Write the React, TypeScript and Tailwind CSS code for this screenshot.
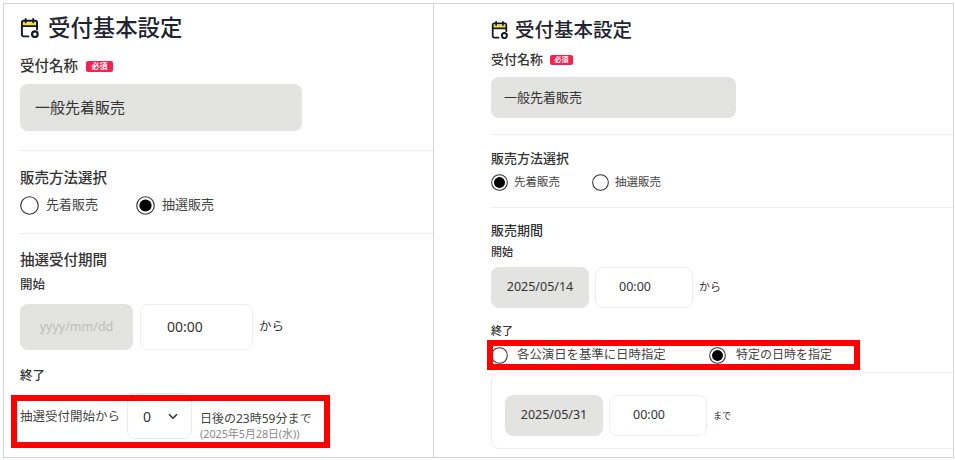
import type {ReactNode} from 'react'

function CalendarIcon({size}: {size: number}) {
  return (
    <svg width={size} height={size} viewBox="1.5 0.5 18 18.5" fill="none" className="shrink-0">
      <path d="M3 8V4.5h14V8z" fill="#f5e12a" />
      <path
        d="M9 17.5H4.5A1.5 1.5 0 0 1 3 16V4.5A1.5 1.5 0 0 1 4.5 3h11A1.5 1.5 0 0 1 17 4.5V11M3 8h14M6.5 1.5v3M13.5 1.5v3"
        stroke="#111827"
        strokeWidth="1.8"
        strokeLinecap="round"
      />
      <circle cx="15" cy="15.5" r="2.6" stroke="#111827" strokeWidth="2" />
    </svg>
  )
}

function Radio({checked, size}: {checked?: boolean; size: number}) {
  return (
    <svg width={size} height={size} viewBox="0 0 18 18" className="shrink-0">
      <circle cx="9" cy="9" r="8.3" fill="#fff" stroke="#333" strokeWidth="1.1" />
      {checked && <circle cx="9" cy="9" r="5.8" fill="#000" />}
    </svg>
  )
}

function Required({className}: {className: string}) {
  return (
    <span className={`flex items-center justify-center rounded-[2px] bg-[#f5214f] font-bold text-white ${className}`}>
      必須
    </span>
  )
}

function Field({children, className}: {children: ReactNode; className: string}) {
  return <div className={`flex items-center rounded-lg ${className}`}>{children}</div>
}

function LeftPanel() {
  return (
    <div className="w-[430px] shrink-0 border-r border-[#d4d4d4] pl-[16px] pt-[9px]">
      <div className="flex h-[30px] items-center gap-[8px]">
        <CalendarIcon size={20} />
        <h2 className="text-[22.4px] font-medium leading-none text-[#1f2430]">受付基本設定</h2>
      </div>
      <div className="mt-[13px] flex h-[20px] items-center gap-[8px]">
        <span className="text-[14.5px] font-medium text-[#333]">受付名称</span>
        <Required className="h-[11px] w-[27px] text-[8px]" />
      </div>
      <Field className="mt-[8px] h-[47px] w-[282px] bg-[#e3e3e2] pl-[15px] text-[15px] text-[#333]">
        一般先着販売
      </Field>
      <div className="mt-[19px] border-t border-[#eeeeee]" />

      <div className="mt-[17px] text-[14.5px] leading-[18px] font-medium text-[#333]">販売方法選択</div>
      <div className="mt-[9px] flex h-[20px] items-center text-[13px] text-[#444]">
        <Radio size={19} />
        <span className="ml-[7px] w-[90px]">先着販売</span>
        <Radio checked size={19} />
        <span className="ml-[7px]">抽選販売</span>
      </div>
      <div className="mt-[18px] border-t border-[#eeeeee]" />

      <div className="mt-[16px] text-[14.5px] leading-[18px] font-medium text-[#333]">抽選受付期間</div>
      <div className="mt-[8px] text-[12.5px] leading-[18px] font-medium text-[#333]">開始</div>
      <div className="mt-[10px] flex items-center">
        <Field className="h-[46px] w-[113px] justify-center bg-[#e3e3e2] text-[12.5px] text-[#bdbdbd]">
          yyyy/mm/dd
        </Field>
        <Field className="ml-[7px] h-[46px] w-[113px] border border-[#eeeeee] pb-[1px] pl-[26px] text-[14px] text-[#333]">
          00:00
        </Field>
        <span className="ml-[6px] text-[12.5px] text-[#333]">から</span>
      </div>
      <div className="mt-[17px] text-[12.5px] leading-[18px] font-medium text-[#333]">終了</div>
      <div className="mt-[8px] flex items-start">
        <span className="w-[107px] self-center pt-[2px] text-[12.5px] text-[#444]">抽選受付開始から</span>
        <div className="flex h-[46px] w-[65px] items-center justify-between rounded-lg border border-[#e8eaf0] pl-[15px] pr-[13px] pt-[1px] text-[14px] text-[#333]">
          0
          <svg width="10" height="7" viewBox="0 0 10 7" fill="none">
            <path d="M1 1.2l4 4 4-4" stroke="#333" strokeWidth="1.6" />
          </svg>
        </div>
        <div className="ml-[8px] pt-[17px]">
          <div className="text-[12px] leading-[18px] text-[#444]">日後の23時59分まで</div>
          <div className="text-[10.8px] leading-[12px] text-[#8a8a8a]">(2025年5月28日(水))</div>
        </div>
      </div>
    </div>
  )
}

function RightPanel() {
  return (
    <div className="min-w-0 flex-1 pl-[57px] pt-[12px]">
      <div className="flex h-[28px] items-center gap-[6px]">
        <CalendarIcon size={18} />
        <h2 className="text-[19.5px] font-medium leading-none text-[#1f2430]">受付基本設定</h2>
      </div>
      <div className="mt-[7px] flex h-[18px] items-center gap-[7px]">
        <span className="text-[13px] font-medium text-[#333]">受付名称</span>
        <Required className="h-[10px] w-[23px] text-[7px]" />
      </div>
      <Field className="mt-[8px] h-[41px] w-[245px] bg-[#e3e3e2] pl-[13px] text-[13px] text-[#333]">
        一般先着販売
      </Field>
      <div className="mt-[16px] border-t border-[#eeeeee]" />

      <div className="mt-[15px] text-[13px] leading-[16px] font-medium text-[#333]">販売方法選択</div>
      <div className="mt-[7px] flex h-[18px] items-center text-[11.5px] text-[#444]">
        <Radio checked size={17} />
        <span className="ml-[6px] w-[78px]">先着販売</span>
        <Radio size={17} />
        <span className="ml-[6px]">抽選販売</span>
      </div>
      <div className="mt-[16px] border-t border-[#eeeeee]" />

      <div className="mt-[14px] text-[13px] leading-[16px] font-medium text-[#333]">販売期間</div>
      <div className="mt-[6px] text-[11px] leading-[16px] font-medium text-[#333]">開始</div>
      <div className="mt-[7px] flex items-center">
        <Field className="h-[41px] w-[98px] justify-center bg-[#e3e3e2] text-[12.5px] text-[#333]">
          2025/05/14
        </Field>
        <Field className="ml-[6px] h-[41px] w-[98px] border border-[#eeeeee] pl-[23px] text-[12.5px] text-[#333]">
          00:00
        </Field>
        <span className="ml-[6px] text-[11px] text-[#333]">から</span>
      </div>
      <div className="mt-[15px] text-[11px] leading-[16px] font-medium text-[#333]">終了</div>
      <div className="mt-[7px] flex h-[18px] items-center text-[12px] text-[#444]">
        <Radio size={17} />
        <span className="ml-[9px] w-[192px] text-[12.4px]">各公演日を基準に日時指定</span>
        <Radio checked size={17} />
        <span className="ml-[10px]">特定の日時を指定</span>
      </div>
      <div className="mt-[8px] flex h-[77px] items-center rounded-l-lg border border-r-0 border-[#eeeeee] pl-[13px] pt-[10px]">
        <Field className="h-[41px] w-[98px] justify-center bg-[#e3e3e2] text-[12.5px] text-[#333]">
          2025/05/31
        </Field>
        <Field className="ml-[6px] h-[41px] w-[98px] border border-[#eeeeee] pl-[23px] text-[12.5px] text-[#333]">
          00:00
        </Field>
        <span className="ml-[6px] text-[9px] text-[#333]">まで</span>
      </div>
    </div>
  )
}

export default function App() {
  return (
    <div className="relative h-[460px] w-[955px] overflow-hidden bg-white font-['Noto_Sans','Noto_Sans_CJK_JP',sans-serif]">
      <div className="ml-[3px] mt-[3px] flex h-[455px] w-[951px] border border-[#d4d4d4]">
        <LeftPanel />
        <RightPanel />
      </div>
      {/* red highlight boxes */}
      <div className="absolute left-[11px] top-[395px] h-[53px] w-[319px] border-[6px] border-[#ff0000]" />
      <div className="absolute left-[487px] top-[340px] h-[30px] w-[373px] border-[6px] border-[#ff0000]" />
    </div>
  )
}
